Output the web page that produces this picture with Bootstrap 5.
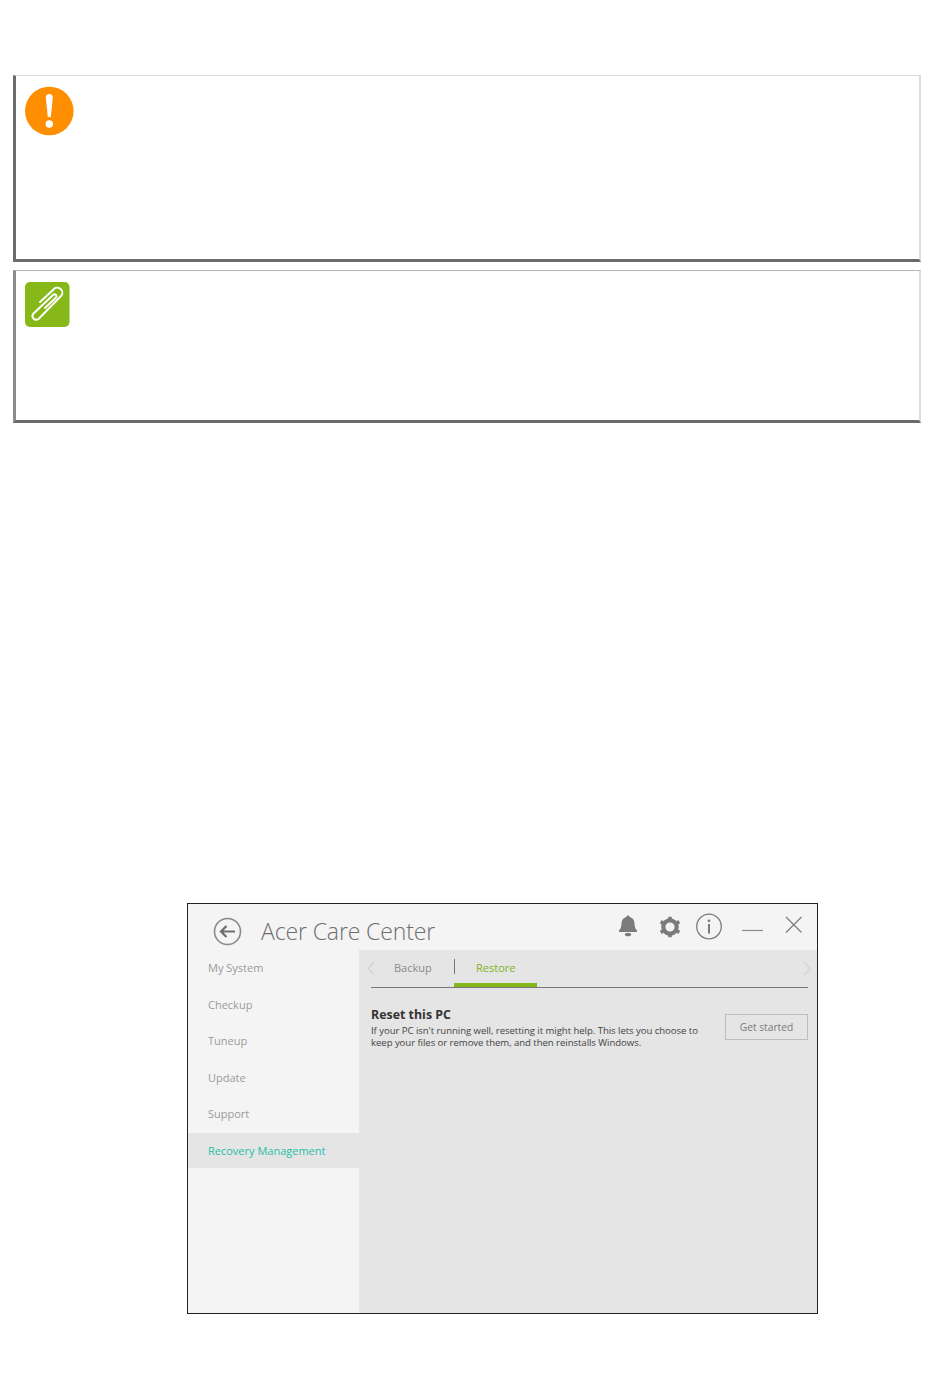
<!DOCTYPE html>
<html lang="en">
<head>
    <meta charset="UTF-8">
    <meta name="viewport" content="width=device-width, initial-scale=1.0">
    <title>Acer Care Center - Recovery Management</title>
    <link href="https://cdn.jsdelivr.net/npm/bootstrap@5.3.0/dist/css/bootstrap.min.css" rel="stylesheet">
    <style>
        body {
            background: #fff;
            font-family: "Open Sans", "Noto Sans", sans-serif;
        }
        .page-wrap {
            width: 950px;
            padding: 75px 29px 0 13px;
        }
        .note-box {
            border-style: solid;
            border-color: #dcdcdc;
            border-width: 1px 2px 3px 3px;
            border-left-color: #6b6b6b;
            border-bottom-color: #6b6b6b;
            padding: 10px 9px;
        }
        .note-warning { height: 187px; margin-bottom: 8px; }
        .note-tip { height: 153px; padding-top: 11px; border-top-color: #b4b4b4; border-left-color: #8c8c8c; }
        .note-warning svg, .note-tip svg { display: block; }
        .care-window {
            width: 631px;
            height: 411px;
            margin: 480px 0 0 174px;
            border: 1px solid #222;
            background: #f4f4f4;
        }
        .care-title-bar { height: 46px; padding-left: 25px; }
        .care-arrow { margin-top: 13px; flex-shrink: 0; }
        .care-title {
            font-size: 23px;
            font-weight: 300;
            letter-spacing: -.12px;
            color: #6e6e6e;
            margin: 9px 0 0 18px;
            line-height: 36px;
        }
        .care-tools { margin-left: auto; padding: 9px 14px 0 0; }
        .tool-bell { margin: 1px 21px 0 0; }
        .tool-gear { margin: 2px 14px 0 0; }
        .tool-info { margin-right: 19px; }
        .tool-min { margin-right: 21px; }
        .tool-close { margin-top: 3px; }
        .care-body { height: 363px; }
        .care-side { width: 171px; }
        .care-side-item {
            height: 36.6px;
            line-height: 36.6px;
            padding-left: 20px;
            font-size: 11px;
            color: #9a9a9a;
        }
        .care-side-item.is-active { height: 35px; background: #e5e5e5; color: #1fbfa5; }
        .care-main { background: #e5e5e5; flex: 1; padding: 0 9px 0 12px; }
        .care-tabs {
            height: 38px;
            border-bottom: 1px solid #777;
            font-size: 11px;
            color: #8a8a8a;
        }
        .care-back { width: 6px; margin: 12px 20px 0 -3px; }
        .care-tab-first { width: 60px; padding-top: 9px; line-height: 18px; }
        .care-tab-active {
            width: 83px;
            height: 37px;
            padding: 9px 0 0 22px;
            line-height: 18px;
            color: #7cb518;
            border-bottom: 4px solid #83b81a;
            position: relative;
        }
        .care-tab-active::before {
            content: "";
            position: absolute;
            left: 0;
            top: 9px;
            height: 15px;
            border-left: 1px solid #777;
        }
        .care-next { margin: 12px -3px 0 auto; }
        .care-reset { margin-top: 18px; }
        .care-reset h6 {
            font-size: 12.4px;
            font-weight: 700;
            color: #333;
            margin: 0;
            padding-top: 1px;
            line-height: 16px;
            font-family: "Open Sans", sans-serif;
        }
        .care-reset p {
            font-size: 9.6px;
            line-height: 12px;
            letter-spacing: -.06px;
            color: #444;
            margin: 2px 0 0;
        }
        .care-start {
            width: 83px;
            height: 26px;
            padding: 1px 0 0;
            margin: 8px 0 0 auto;
            font-size: 10.2px;
            color: #7a7a7a;
            background: #e5e5e5;
            border: 1px solid #bdbdbd;
            border-radius: 0;
            flex-shrink: 0;
        }
    </style>
</head>
<body>
    <div class="page-wrap">
        <div class="note-box note-warning">
            <svg width="50" height="50" viewBox="0 0 50 50">
                <circle cx="24.300" cy="25" r="24.300" fill="#ff8f00"/>
                <path d="M20.800 11.500a3.500 3.500 0 0 1 7 0L25.800 31h-3z" fill="#fff"/>
                <circle cx="24.300" cy="38" r="3.700" fill="#fff"/>
            </svg>
        </div>
        <div class="note-box note-tip">
            <svg width="45" height="45" viewBox="0 0 45 45">
                <rect width="44.500" height="45" rx="5" fill="#86b817"/>
                <path d="M15 20L28 8a4 4 0 0 1 8.500 5.500L13.500 37a3.800 3.800 0 0 1-5.500-5L28 13a1.800 1.800 0 0 1 3 2.500L20 26" fill="none" stroke="#fff" stroke-width="1.900" stroke-linecap="round" stroke-linejoin="round"/>
            </svg>
        </div>

        <div class="care-window">
            <div class="care-title-bar d-flex">
                <svg class="care-arrow" width="30" height="30" viewBox="0 0 30 30">
                    <circle cx="14.500" cy="14.500" r="13" fill="none" stroke="#8a8a8a" stroke-width="1.600"/>
                    <path d="M22 14.500H8M13.500 9l-5.500 5.500 5.500 5.500" fill="none" stroke="#6e6e6e" stroke-width="2.200"/>
                </svg>
                <div class="care-title">Acer Care Center</div>
                <div class="care-tools d-flex align-items-start">
                    <svg class="tool-bell" width="20" height="24" viewBox="0 0 20 24">
                        <path d="M10 1.500c1 0 1.700.7 1.800 1.600 3 .8 4.700 3.300 4.700 6.400 0 3.500 1 5.500 2.500 7v1.500H1V16.500c1.500-1.500 2.500-3.500 2.500-7 0-3.100 1.700-5.600 4.700-6.400.1-.9.800-1.600 1.800-1.600z" fill="#7b7b7b"/>
                        <ellipse cx="10" cy="20.500" rx="3.200" ry="1.800" fill="#7b7b7b"/>
                    </svg>
                    <svg class="tool-gear" width="22" height="24" viewBox="0 0 22 24">
                        <circle cx="11" cy="12" r="6.700" fill="none" stroke="#7b7b7b" stroke-width="4.200"/>
                        <path d="M11 1.800v3M11 19.200v3M1.700 6.600l2.700 1.600M17.600 15.800l2.700 1.600M1.700 17.400l2.700-1.600M17.600 8.200l2.700-1.600" stroke="#7b7b7b" stroke-width="3.600"/>
                    </svg>
                    <svg class="tool-info" width="28" height="28" viewBox="0 0 28 28">
                        <circle cx="14" cy="13.500" r="12.300" fill="none" stroke="#7b7b7b" stroke-width="1.300"/>
                        <circle cx="14" cy="7.800" r="1.400" fill="#7b7b7b"/>
                        <path d="M14 11v9.500" stroke="#7b7b7b" stroke-width="2"/>
                    </svg>
                    <svg class="tool-min" width="22" height="22" viewBox="0 0 22 22">
                        <path d="M0 17.500h21" stroke="#8a8a8a" stroke-width="1.200"/>
                    </svg>
                    <svg class="tool-close" width="18" height="18" viewBox="0 0 18 18">
                        <path d="M1 1l15.500 15.500M16.500 1L1 16.500" stroke="#7b7b7b" stroke-width="1.200"/>
                    </svg>
                </div>
            </div>
            <div class="care-body d-flex">
                <div class="care-side">
                    <div class="care-side-item">My System</div>
                    <div class="care-side-item">Checkup</div>
                    <div class="care-side-item">Tuneup</div>
                    <div class="care-side-item">Update</div>
                    <div class="care-side-item">Support</div>
                    <div class="care-side-item is-active">Recovery Management</div>
                </div>
                <div class="care-main">
                    <div class="care-tabs d-flex">
                        <svg class="care-back" height="13" viewBox="0 0 6 13"><path d="M5.500.5L.5 6.500l5 6" fill="none" stroke="#d4d4d4" stroke-width="1.500"/></svg>
                        <div class="care-tab-first">Backup</div>
                        <div class="care-tab-active">Restore</div>
                        <svg class="care-next" width="7" height="13" viewBox="0 0 7 13"><path d="M.5.500l6 6-6 6" fill="none" stroke="#d4d4d4" stroke-width="1.500"/></svg>
                    </div>
                    <div class="care-reset d-flex">
                        <div>
                            <h6>Reset this PC</h6>
                            <p>If your PC isn't running well, resetting it might help. This lets you choose to<br>keep your files or remove them, and then reinstalls Windows.</p>
                        </div>
                        <button type="button" class="btn care-start">Get started</button>
                    </div>
                </div>
            </div>
        </div>
    </div>
    <script src="https://cdn.jsdelivr.net/npm/bootstrap@5.3.0/dist/js/bootstrap.bundle.min.js"></script>
</body>
</html>
